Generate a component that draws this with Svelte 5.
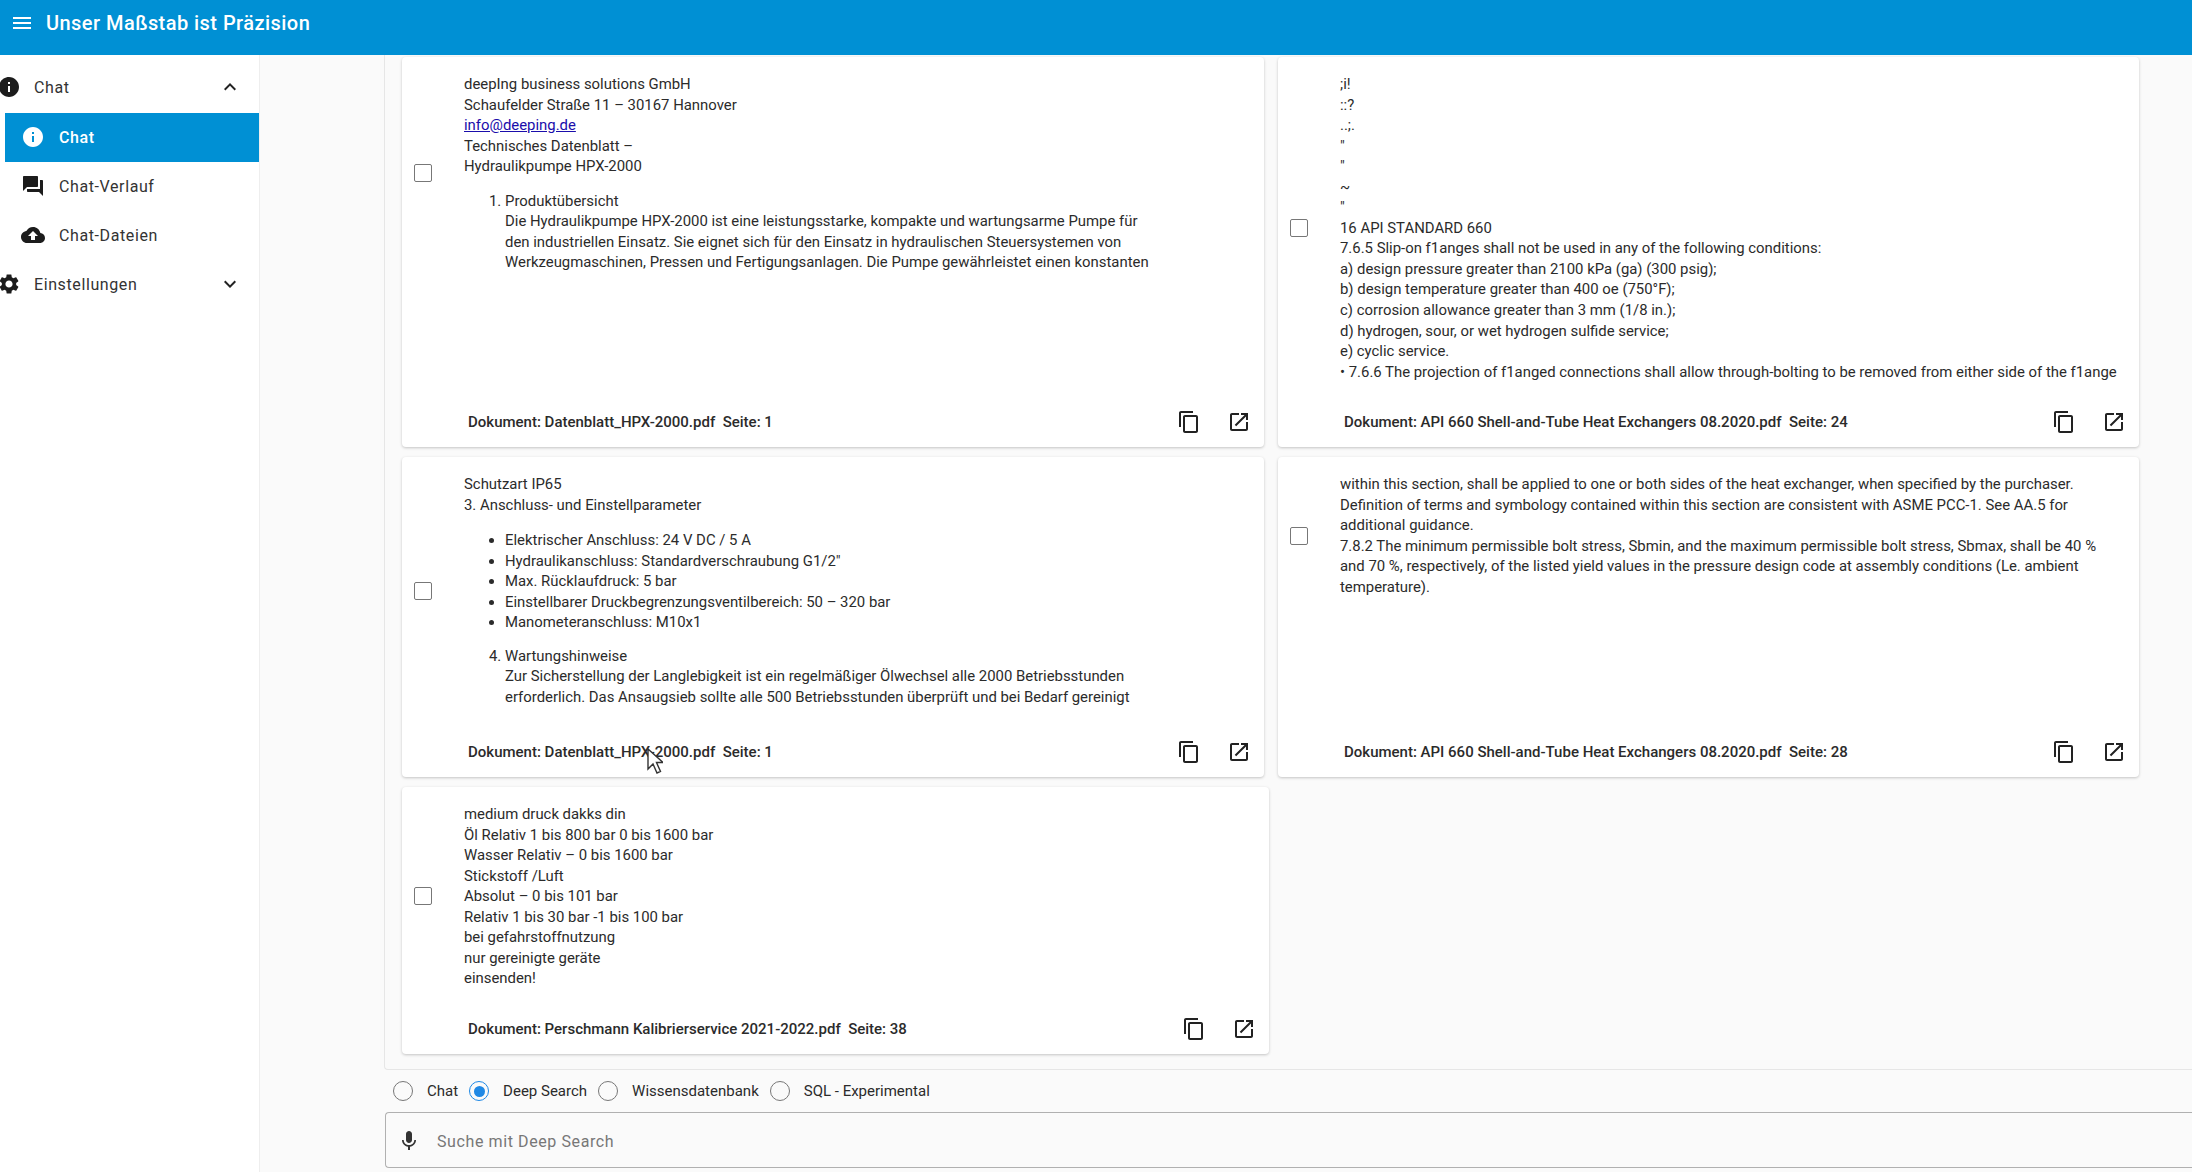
<script lang="ts">
  const icons = {
    menu: "M3 18h18v-2H3v2zm0-5h18v-2H3v2zm0-7v2h18V6H3z",
    info: "M12 2C6.48 2 2 6.48 2 12s4.48 10 10 10 10-4.48 10-10S17.52 2 12 2zm1 15h-2v-6h2v6zm0-8h-2V7h2v2z",
    forum: "M21 6h-2v9H6v2c0 .55.45 1 1 1h11l4 4V7c0-.55-.45-1-1-1zm-4 6V3c0-.55-.45-1-1-1H3c-.55 0-1 .45-1 1v14l4-4h10c.55 0 1-.45 1-1z",
    cloud: "M19.35 10.04C18.67 6.59 15.64 4 12 4 9.11 4 6.6 5.64 5.35 8.04 2.34 8.36 0 10.91 0 14c0 3.31 2.69 6 6 6h13c2.76 0 5-2.24 5-5 0-2.64-2.05-4.78-4.65-4.96zM14 13v4h-4v-4H7l5-5 5 5h-3z",
    gear: "M19.14 12.94c.04-.3.06-.61.06-.94 0-.32-.02-.64-.07-.94l2.03-1.58c.18-.14.23-.41.12-.61l-1.92-3.32c-.12-.22-.37-.29-.59-.22l-2.39.96c-.5-.38-1.03-.7-1.62-.94l-.36-2.54c-.04-.24-.24-.41-.48-.41h-3.84c-.24 0-.43.17-.47.41l-.36 2.54c-.59.24-1.13.57-1.62.94l-2.39-.96c-.22-.08-.47 0-.59.22L2.74 8.87c-.12.21-.08.47.12.61l2.03 1.58c-.05.3-.09.63-.09.94s.02.64.07.94l-2.03 1.58c-.18.14-.23.41-.12.61l1.92 3.32c.12.22.37.29.59.22l2.39-.96c.5.38 1.03.7 1.62.94l.36 2.54c.05.24.24.41.48.41h3.84c.24 0 .44-.17.47-.41l.36-2.54c.59-.24 1.13-.56 1.62-.94l2.39.96c.22.08.47 0 .59-.22l1.92-3.32c.12-.22.07-.47-.12-.61l-2.01-1.58zM12 15.6c-1.98 0-3.6-1.62-3.6-3.6s1.62-3.6 3.6-3.6 3.6 1.62 3.6 3.6-1.62 3.6-3.6 3.6z",
    up: "M7.41 15.41 12 10.83l4.59 4.58L18 14l-6-6-6 6z",
    down: "M7.41 8.59 12 13.17l4.59-4.58L18 10l-6 6-6-6z",
    copy: "M16 1H4c-1.1 0-2 .9-2 2v14h2V3h12V1zm3 4H8c-1.1 0-2 .9-2 2v14c0 1.1.9 2 2 2h11c1.1 0 2-.9 2-2V7c0-1.1-.9-2-2-2zm0 16H8V7h11v14z",
    open: "M19 19H5V5h7V3H5c-1.11 0-2 .9-2 2v14c0 1.1.89 2 2 2h14c1.1 0 2-.9 2-2v-7h-2v7zM14 3v2h3.59l-9.83 9.83 1.41 1.41L19 6.41V10h2V3h-7z",
    mic: "M12 14c1.66 0 3-1.34 3-3V5c0-1.66-1.34-3-3-3S9 3.34 9 5v6c0 1.66 1.34 3 3 3zm5.3-3c0 3-2.54 5.1-5.3 5.1S6.7 14 6.7 11H5c0 3.41 2.72 6.23 6 6.72V21h2v-3.28c3.28-.48 6-3.3 6-6.72h-1.7z",
  };

  const api24 = [
    ";i!", "::?", "..;.", "\"", "\"", "~", "\"",
    "16 API STANDARD 660",
    "7.6.5 Slip-on f1anges shall not be used in any of the following conditions:",
    "a) design pressure greater than 2100 kPa (ga) (300 psig);",
    "b) design temperature greater than 400 oe (750°F);",
    "c) corrosion allowance greater than 3 mm (1/8 in.);",
    "d) hydrogen, sour, or wet hydrogen sulfide service;",
    "e) cyclic service.",
    "• 7.6.6 The projection of f1anged connections shall allow through-bolting to be removed from either side of the f1ange",
  ];
  const api28 = [
    "within this section, shall be applied to one or both sides of the heat exchanger, when specified by the purchaser.",
    "Definition of terms and symbology contained within this section are consistent with ASME PCC-1. See AA.5 for",
    "additional guidance.",
    "7.8.2 The minimum permissible bolt stress, Sbmin, and the maximum permissible bolt stress, Sbmax, shall be 40 %",
    "and 70 %, respectively, of the listed yield values in the pressure design code at assembly conditions (Le. ambient",
    "temperature).",
  ];
  const kalib = [
    "medium druck dakks din",
    "Öl Relativ 1 bis 800 bar 0 bis 1600 bar",
    "Wasser Relativ – 0 bis 1600 bar",
    "Stickstoff /Luft",
    "Absolut – 0 bis 101 bar",
    "Relativ 1 bis 30 bar -1 bis 100 bar",
    "bei gefahrstoffnutzung",
    "nur gereinigte geräte",
    "einsenden!",
  ];
  const specs = [
    "Elektrischer Anschluss: 24 V DC / 5 A",
    "Hydraulikanschluss: Standardverschraubung G1/2\"",
    "Max. Rücklaufdruck: 5 bar",
    "Einstellbarer Druckbegrenzungsventilbereich: 50 – 320 bar",
    "Manometeranschluss: M10x1",
  ];
  const modes = ["Chat", "Deep Search", "Wissensdatenbank", "SQL - Experimental"];
</script>

{#snippet icon(d, cls = "")}
  <svg class="icon {cls}" viewBox="0 0 24 24" aria-hidden="true"><path {d} /></svg>
{/snippet}

{#snippet footer(doc, page)}
  <div class="foot">
    <span class="doc">Dokument: {doc}&nbsp;&nbsp;Seite: {page}</span>
    <span class="tools">
      <span class="tool">{@render icon(icons.copy)}</span>
      <span class="tool">{@render icon(icons.open)}</span>
    </span>
  </div>
{/snippet}

<div class="app">
  <header class="bar">
    <span class="burger">{@render icon(icons.menu)}</span>
    <h1>Unser Maßstab ist Präzision</h1>
  </header>

  <div class="body">
    <nav class="side">
      <div class="group">
        <span class="g-icon">{@render icon(icons.info)}</span>
        <span>Chat</span>
        <span class="chev">{@render icon(icons.up)}</span>
      </div>
      <div class="item active">
        <span class="i-icon">{@render icon(icons.info)}</span>
        <span>Chat</span>
      </div>
      <div class="item">
        <span class="i-icon">{@render icon(icons.forum)}</span>
        <span>Chat-Verlauf</span>
      </div>
      <div class="item">
        <span class="i-icon">{@render icon(icons.cloud)}</span>
        <span>Chat-Dateien</span>
      </div>
      <div class="group">
        <span class="g-icon">{@render icon(icons.gear)}</span>
        <span>Einstellungen</span>
        <span class="chev">{@render icon(icons.down)}</span>
      </div>
    </nav>

    <main class="main">
      <section class="panel">
        <div class="cards">
          <article class="card">
            <div class="row">
              <span class="check"></span>
              <div class="text">
                <div>deepIng business solutions GmbH</div>
                <div>Schaufelder Straße 11 – 30167 Hannover</div>
                <div><a href="#top">info@deeping.de</a></div>
                <div>Technisches Datenblatt –</div>
                <div>Hydraulikpumpe HPX-2000</div>
                <ol>
                  <li>Produktübersicht<br />Die Hydraulikpumpe HPX-2000 ist eine leistungsstarke, kompakte und wartungsarme Pumpe für<br />den industriellen Einsatz. Sie eignet sich für den Einsatz in hydraulischen Steuersystemen von<br />Werkzeugmaschinen, Pressen und Fertigungsanlagen. Die Pumpe gewährleistet einen konstanten</li>
                </ol>
              </div>
            </div>
            {@render footer("Datenblatt_HPX-2000.pdf", 1)}
          </article>

          <article class="card">
            <div class="row">
              <span class="check"></span>
              <div class="text">
                {#each api24 as line}<div>{line}</div>{/each}
              </div>
            </div>
            {@render footer("API 660 Shell-and-Tube Heat Exchangers 08.2020.pdf", 24)}
          </article>

          <article class="card">
            <div class="row">
              <span class="check"></span>
              <div class="text">
                <div>Schutzart IP65</div>
                <div>3. Anschluss- und Einstellparameter</div>
                <ul>
                  {#each specs as s}<li>{s}</li>{/each}
                </ul>
                <ol start="4">
                  <li>Wartungshinweise<br />Zur Sicherstellung der Langlebigkeit ist ein regelmäßiger Ölwechsel alle 2000 Betriebsstunden<br />erforderlich. Das Ansaugsieb sollte alle 500 Betriebsstunden überprüft und bei Bedarf gereinigt</li>
                </ol>
              </div>
            </div>
            {@render footer("Datenblatt_HPX-2000.pdf", 1)}
          </article>

          <article class="card">
            <div class="row">
              <span class="check"></span>
              <div class="text">
                {#each api28 as line}<div>{line}</div>{/each}
              </div>
            </div>
            {@render footer("API 660 Shell-and-Tube Heat Exchangers 08.2020.pdf", 28)}
          </article>

          <article class="card wide">
            <div class="row">
              <span class="check"></span>
              <div class="text">
                {#each kalib as line}<div>{line}</div>{/each}
              </div>
            </div>
            {@render footer("Perschmann Kalibrierservice 2021-2022.pdf", 38)}
          </article>
        </div>
        <svg class="cursor" viewBox="0 0 16 26" aria-hidden="true">
          <path d="M1 1v20l5-5 4 9 3.5-1.5-4-9H16z" fill="#fff" stroke="#333" stroke-width="1.4" />
        </svg>
      </section>

      <div class="modes">
        {#each modes as m, i}
          <span class="mode" class:on={i === 1}>
            <span class="radio"></span>
            <span>{m}</span>
          </span>
        {/each}
      </div>

      <div class="input">
        <span class="mic">{@render icon(icons.mic)}</span>
        <span class="ph">Suche mit Deep Search</span>
      </div>
    </main>
  </div>
</div>

<style>
  :global(body) {
    margin: 0;
    background: #fafafa;
    overflow: hidden;
  }

  .app {
    width: 2192px;
    height: 1172px;
    display: flex;
    flex-direction: column;
    font-family: Roboto, "Liberation Sans", sans-serif;
    font-size: 14.9px;
    color: #2b2b2b;
    overflow: hidden;
  }

  .icon {
    display: block;
    width: 24px;
    height: 24px;
    fill: currentColor;
  }

  .bar {
    height: 55px;
    flex: none;
    background: #0090d4;
    color: #fff;
    display: flex;
    align-items: center;
    padding: 0 0 9px 10px;
    box-sizing: border-box;
  }

  .bar h1 {
    margin: 0 0 0 12px;
    font-size: 20px;
    font-weight: 500;
    letter-spacing: .45px;
  }

  .body {
    flex: 1;
    display: flex;
    min-height: 0;
  }

  .side {
    width: 260px;
    flex: none;
    background: #fff;
    padding-top: 8px;
    box-sizing: border-box;
    border-right: 1px solid #eee;
    font-size: 16px;
    letter-spacing: .6px;
    color: #333;
  }

  .group,
  .item {
    height: 49px;
    display: flex;
    align-items: center;
  }

  .group:first-child {
    margin-bottom: 1px;
  }

  .group {
    padding-left: 34px;
    position: relative;
  }

  .g-icon {
    position: absolute;
    left: -3px;
    top: 12px;
    color: #1c1c1c;
  }

  .chev {
    position: absolute;
    left: 218px;
    top: 12px;
    color: #222;
  }

  .item {
    margin-left: 5px;
    padding-left: 54px;
    position: relative;
  }

  .i-icon {
    position: absolute;
    left: 16px;
    top: 12px;
    color: #1c1c1c;
  }

  .item.active {
    background: #0090d4;
    color: #fff;
    font-weight: 500;
  }

  .item.active .i-icon {
    color: #fff;
  }

  .main {
    flex: 1;
    min-width: 0;
    padding-left: 124px;
    display: flex;
    flex-direction: column;
  }

  .panel {
    height: 1015px;
    flex: none;
    box-sizing: border-box;
    padding: 2px 0 0 17px;
    border-left: 1px solid #e6e6e6;
    border-bottom: 1px solid #e6e6e6;
    border-bottom-left-radius: 4px;
    position: relative;
  }

  .cards {
    display: grid;
    grid-template-columns: 862px 861px;
    grid-template-rows: 390px 320px 267px;
    column-gap: 14px;
    row-gap: 10px;
    align-items: stretch;
  }

  .card {
    background: #fff;
    border-radius: 4px;
    box-shadow: 0 1px 3px rgba(0, 0, 0, .22);
    display: flex;
    flex-direction: column;
    padding-top: 17px;
  }

  .card.wide {
    width: 867px;
  }

  .row {
    display: flex;
    align-items: center;
  }

  .check {
    flex: none;
    width: 16px;
    height: 16px;
    border: 1.5px solid #777;
    border-radius: 2px;
    margin: 0 32px 0 12px;
  }

  .text {
    line-height: 20.55px;
    white-space: nowrap;
  }

  .text a {
    color: #1a0dab;
  }

  .text ul,
  .text ol {
    margin: 14px 0 0;
    padding-left: 41px;
  }

  .text ul {
    margin-top: 15px;
  }

  .text ul + ol {
    margin-top: 13px;
  }

  .foot {
    height: 50px;
    flex: none;
    margin-top: auto;
    display: flex;
    align-items: center;
    justify-content: space-between;
    padding-left: 66px;
    font-size: 15px;
    font-weight: 500;
  }

  .tools {
    display: flex;
  }

  .tool {
    width: 50px;
    height: 50px;
    display: flex;
    align-items: center;
    justify-content: center;
    color: #222;
  }

  .cursor {
    position: absolute;
    left: 262px;
    top: 693px;
    width: 16px;
    height: 26px;
  }

  .modes {
    height: 42px;
    flex: none;
    box-sizing: border-box;
    padding: 0 0 0 9px;
    display: flex;
    align-items: center;
    gap: 11px;
    font-size: 15px;
  }

  .mode {
    display: flex;
    align-items: center;
    gap: 14px;
  }

  .radio {
    width: 20px;
    height: 20px;
    box-sizing: border-box;
    border: 1.5px solid #777;
    border-radius: 50%;
    position: relative;
  }

  .mode.on .radio {
    border-color: #1e88e5;
  }

  .mode.on .radio::after {
    content: "";
    position: absolute;
    inset: 3.5px;
    border-radius: 50%;
    background: #1e88e5;
  }

  .input {
    height: 56px;
    flex: none;
    margin-left: 1px;
    padding: 2px 0 0 11px;
    box-sizing: border-box;
    border: 1px solid #b0b0b0;
    border-right: none;
    border-radius: 4px 0 0 4px;
    display: flex;
    align-items: center;
    background: #fafafa;
  }

  .mic {
    color: #333;
  }

  .ph {
    margin-left: 16px;
    font-size: 16px;
    letter-spacing: .6px;
    color: #777;
  }
</style>
